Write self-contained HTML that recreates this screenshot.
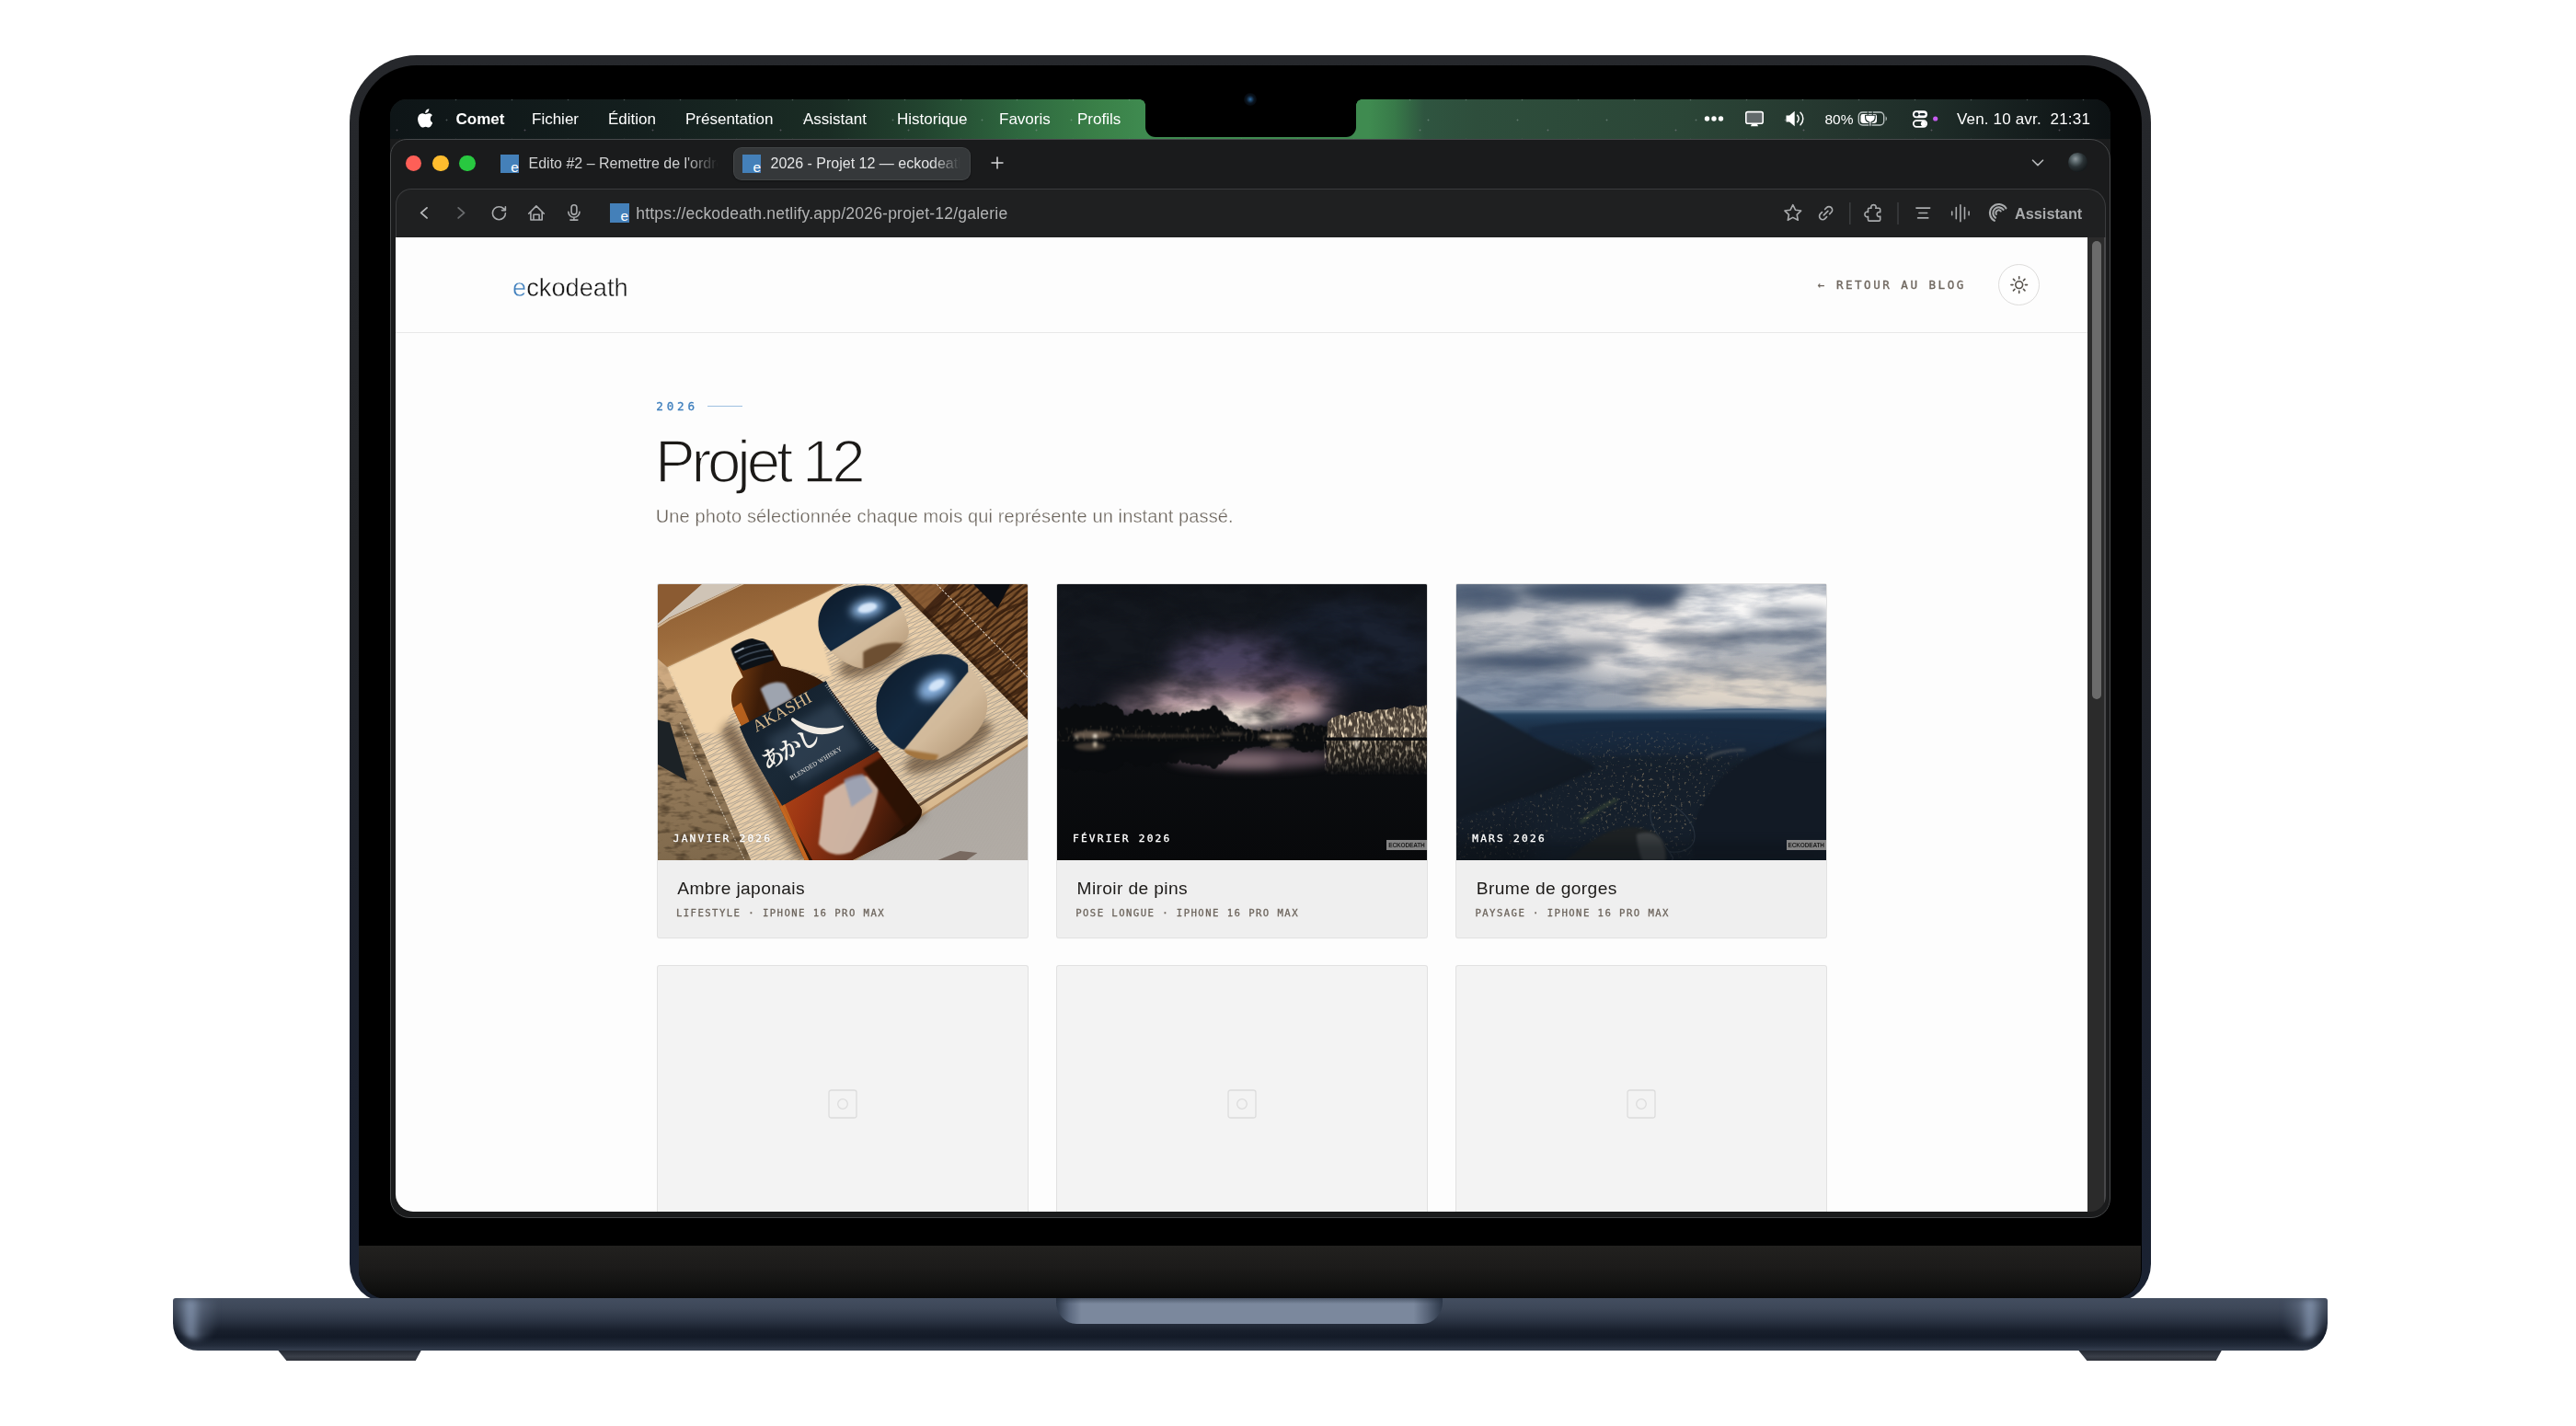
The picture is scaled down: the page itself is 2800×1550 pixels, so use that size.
<!DOCTYPE html>
<html lang="fr">
<head>
<meta charset="utf-8">
<title>2026 - Projet 12 — eckodeath</title>
<style>
*{box-sizing:border-box;margin:0;padding:0}
html,body{width:2800px;height:1550px;overflow:hidden;background:#fff}
body{position:relative;font-family:"Liberation Sans",sans-serif;color:#1c1a18}
.a{position:absolute}
svg{display:block}
/* ---------- laptop ---------- */
#lid{left:380px;top:60px;width:1958px;height:1356px;border-radius:73px 73px 42px 42px;background:linear-gradient(180deg,#26282c 0,#212327 40%,#1b202c 75%,#1a2232 100%)}
#bezel{left:390px;top:70.5px;width:1937.5px;height:1341px;border-radius:63px 63px 32px 32px;background:#000}
#chin{left:390px;top:1353.5px;width:1937px;height:58px;border-radius:0 0 31px 31px;background:linear-gradient(180deg,#22211f 0,#1c1b1a 40%,#111110 80%,#090909 100%)}
#base{overflow:hidden;left:187.5px;top:1410.5px;width:2342px;height:57.5px;border-radius:3px 3px 27px 27px / 3px 3px 30px 30px;background:linear-gradient(180deg,#434e60 0,#3d4758 20%,#2c3545 42%,#181f2c 62%,#131a27 74%,#222b3a 90%,#353f4f 100%)}
#base:before,#base:after{content:"";position:absolute;top:1px;width:46px;height:44px;border-radius:3px 3px 24px 24px;filter:blur(3px)}
#base:before{left:3px;background:linear-gradient(90deg,rgba(150,168,196,0) 0,rgba(150,168,196,.75) 35%,rgba(150,168,196,.25) 60%,rgba(150,168,196,0) 100%)}
#base:after{right:3px;background:linear-gradient(270deg,rgba(150,168,196,0) 0,rgba(150,168,196,.75) 35%,rgba(150,168,196,.25) 60%,rgba(150,168,196,0) 100%)}
#basenotch{left:1148px;top:1410.5px;width:420px;height:28.5px;border-radius:0 0 22px 22px / 0 0 24px 24px;background:linear-gradient(180deg,rgba(40,50,66,.55) 0,rgba(40,50,66,0) 22%),linear-gradient(90deg,#2d3849 0,#5d6a80 3.5%,#7b889d 6.5%,#7b889d 92.5%,#596579 96%,#2c3748 100%)}
.foot{top:1467.5px;width:156px;height:11.5px;background:linear-gradient(180deg,#232832 0,#3a3f49 60%,#2c3038 100%);clip-path:polygon(0 0,100% 0,96% 100%,6% 100%)}
/* ---------- screen ---------- */
#screen{left:424px;top:108px;width:1870px;height:1215.5px;border-radius:18px 18px 21px 21px;overflow:hidden;background:#1a1b1c}
#abs{left:-424px;top:-108px;width:2800px;height:1550px}
.mi,#url,#back,#yr,#logo,.tabt,.mo,.ct,.cs,#h1,.gs{opacity:.999}

/* ---------- menubar ---------- */
#menubar{left:424px;top:108px;width:1870px;height:43px;background:
 linear-gradient(90deg,#0e1517 0,#141f1e 276px,#1a2c24 476px,#22442f 580px,#2f6a40 690px,#3a8048 770px,#3f8b50 822px,#3f8b50 1064px,#387a49 1092px,#2f5540 1124px,#2e4e3c 1180px,#2b4637 1400px,#25372f 1560px,#1e2c28 1680px,#141c1c 1790px,#0c1113 1870px)}
#stars{left:424px;top:108px;width:1870px;height:43px;opacity:.32;background-image:radial-gradient(circle,#cfd8dc 0,#cfd8dc .7px,transparent 1.2px),radial-gradient(circle,#b9c7c9 0,#b9c7c9 .6px,transparent 1.1px),radial-gradient(circle,#d9b6d6 0,#d9b6d6 .7px,transparent 1.2px);background-size:97px 31px,61px 43px,139px 37px;background-position:13px 7px,41px 22px,77px 15px}
#notch{left:1244.5px;top:104px;width:229px;height:44.5px;background:#000;border-radius:0 0 11px 11px}
#notch:before,#notch:after{content:"";position:absolute;top:4px;width:6px;height:6px}
#notch:before{left:-6px;background:radial-gradient(circle at 0 100%,transparent 5.5px,#000 6px)}
#notch:after{right:-6px;background:radial-gradient(circle at 100% 100%,transparent 5.5px,#000 6px)}
#cam{left:1351.500px;top:100.800px;width:14.500px;height:14.500px;border-radius:50%;background:radial-gradient(circle,#2f6ea8 0,#1d4468 18%,#0b1622 42%,#05080c 70%,#000 100%)}
.mi{top:119px;height:22px;line-height:22px;font-size:17px;color:#fff;white-space:nowrap}
.mb{font-weight:bold}
/* ---------- browser ---------- */
#win{left:424px;top:150.5px;width:1870px;height:1173px;border-radius:18px 22px 21px 21px;background:#1a1b1c;border:1px solid #47494b}
#tool{left:430px;top:205px;width:1859px;height:60px;border-radius:17px 20px 0 0;background:#1f2021;border:1px solid #3b3c3e;border-bottom:none}
.tl{top:168.75px;width:17.5px;height:17.5px;border-radius:50%}
.fav{width:20px;height:20px;background:#4480b9;overflow:hidden}
.fav i{position:absolute;left:11.4px;top:6px;font:normal 15.5px/16px "Liberation Sans",sans-serif;color:#fff}
.tabt{top:167px;height:22px;line-height:22px;font-size:16px;white-space:nowrap;overflow:hidden}
#tab2{left:796.5px;top:159.5px;width:258px;height:36px;border-radius:9px;background:#35383a;box-shadow:inset 0 0 0 1px rgba(255,255,255,.07),0 1px 2px rgba(0,0,0,.35)}
#url{left:691.2px;top:220px;height:24px;line-height:24px;font-size:17.5px;letter-spacing:.22px;color:#b3b4b5;white-space:nowrap}
.ic{fill:none;stroke:#a9abad;stroke-width:1.6;stroke-linecap:round;stroke-linejoin:round}
#track{left:2268.5px;top:257.5px;width:20.3px;height:1059.75px;background:linear-gradient(90deg,#2b2b2b 0,#2b2b2b 17.8px,#48484a 17.9px,#48484a 100%);border-radius:0 0 17px 0}
#thumb{left:2273.5px;top:262px;width:10.5px;height:498px;border-radius:5.5px;background:#6b6b6b}

/* ---------- page ---------- */
#page{left:430px;top:257.5px;width:1838.75px;height:1059.75px;background:#fdfdfd;overflow:hidden;border-radius:0 0 0 19px}
#pabs{left:-430px;top:-257.5px;width:2800px;height:1550px}
.mono{font-family:"DejaVu Sans Mono","Liberation Mono",monospace;white-space:nowrap;-webkit-text-stroke:.32px currentColor}
#logo{left:557px;top:295px;height:36px;line-height:36px;font-size:27.25px;color:#161616;white-space:nowrap;-webkit-text-stroke:.4px #fdfdfd}
#logo b{font-weight:normal;color:#3f7fbd}
#back{left:1975.8px;top:299.5px;height:20px;line-height:20px;font-size:12.6px;letter-spacing:2.48px;color:#6e665e}
#tog{left:2172px;top:287px;width:45px;height:45px;border-radius:50%;border:1.2px solid #dddcdb;background:#fefefe}
#yr{left:713.3px;top:432.4px;height:20px;line-height:20px;font-size:12.6px;letter-spacing:3.8px;color:#3f7fbd}
#h1{left:712px;top:461.9px;height:80px;line-height:80px;font-size:65.5px;letter-spacing:-4.2px;color:#1c1a18;white-space:nowrap;-webkit-text-stroke:1.7px #fdfdfd}
#sub{left:712.8px;top:548px;height:26px;line-height:26px;font-size:20px;letter-spacing:.13px;color:#6a635b;white-space:nowrap;-webkit-text-stroke:.3px #fdfdfd;opacity:.999}
.card{width:402px;height:384px;top:634.5px;background:#efefef;border-radius:2px;box-shadow:0 0 0 1px #e2e2e2,0 1px 2px rgba(0,0,0,.05);overflow:hidden}
.ph{left:0;top:0;width:402px;height:300.5px;overflow:hidden}
.ph svg{position:absolute;left:0;top:0;width:402px;height:300.5px}
.mo{left:17.2px;top:269.5px;height:16px;line-height:16px;font-size:11.2px;letter-spacing:2.23px;color:#fff;text-shadow:0 0 2px rgba(0,0,0,.35)}
.ct{left:21.8px;top:318.5px;height:26px;line-height:26px;font-size:19.2px;color:#1c1a18;white-space:nowrap;letter-spacing:.38px}
.cs{left:20.4px;top:349px;height:16px;line-height:16px;font-size:10.6px;letter-spacing:1.455px;color:#6e665e}
.wm{left:358.5px;top:278px;width:43.5px;height:11.5px;background:#858585;color:#1d1d1d;font:bold 6.5px/11.5px "Liberation Sans",sans-serif;text-align:center;letter-spacing:-.15px;overflow:hidden}
.card2{width:402px;height:384px;top:1049.5px;background:#f3f3f3;border-radius:2px;box-shadow:0 0 0 1px #e1e1e1}
.card2 svg{position:absolute;left:185px;top:134px}
</style>
</head>
<body>
<div id="lid" class="a"></div>
<div id="bezel" class="a"></div>
<div id="chin" class="a"></div>
<div id="base" class="a"></div>
<div id="basenotch" class="a"></div>
<div class="foot a" style="left:302px"></div>
<div class="foot a" style="left:2259px"></div>
<div id="screen" class="a"><div id="abs" class="a">
<div id="menubar" class="a"></div>
<div id="stars" class="a"></div>
<div id="notch" class="a"></div>
<svg class="a" style="left:452px;top:117.5px" width="18" height="21" viewBox="0 0 170 200"><path fill="#fff" d="M150 105c0-24 20-35 21-36-11-17-29-19-35-19-15-2-29 9-37 9-8 0-19-9-32-8-16 0-31 9-40 24-17 30-4 73 12 97 8 12 18 25 30 24 12 0 17-8 31-8 15 0 19 8 32 8 13 0 21-12 29-24 9-13 13-26 13-27-1 0-25-10-25-38zM126 33c7-8 11-19 10-31-10 1-22 7-29 15-6 7-12 19-10 30 11 1 22-6 29-14z"/></svg>
<div class="a mi mb" style="left:495.5px">Comet</div>
<div class="a mi" style="left:578px">Fichier</div>
<div class="a mi" style="left:661px">Édition</div>
<div class="a mi" style="left:745px">Présentation</div>
<div class="a mi" style="left:873px">Assistant</div>
<div class="a mi" style="left:975px">Historique</div>
<div class="a mi" style="left:1086px">Favoris</div>
<div class="a mi" style="left:1171px">Profils</div>
<!-- status items -->
<svg class="a" style="left:1850px;top:118px" width="230" height="24" viewBox="0 0 230 24">
 <g fill="#fff"><circle cx="5.5" cy="11" r="2.7"/><circle cx="13" cy="11" r="2.7"/><circle cx="20.5" cy="11" r="2.7"/></g>
 <rect x="47.8" y="3.6" width="18.4" height="12.6" rx="2" fill="#626a6b" stroke="#fff" stroke-width="1.6"/><path d="M53 19.3h8l-1-2.6h-6z" fill="#fff"/>
 <path d="M91.5 7.5h3.6l5.6-4.7v16.4l-5.6-4.7h-3.6z" fill="#fff"/><path d="M103.6 7.2a5.4 5.4 0 0 1 0 7.6M107 4.2a9.6 9.6 0 0 1 0 13.6" fill="none" stroke="#fff" stroke-width="1.5" stroke-linecap="round"/>
 <rect x="170.3" y="4" width="27.4" height="14" rx="4.2" fill="none" stroke="#b9c2c0" stroke-width="1.4"/><rect x="172.4" y="6.1" width="17.6" height="9.8" rx="2.4" fill="#fff"/><path d="M199.6 8.6c1.7.5 1.7 4.3 0 4.8z" fill="#b9c2c0"/>
 <path d="M180.3 3.2v4.2m5-4.2v4.2M177.6 7.2h10.6v2.4a5.3 5.3 0 0 1-4.2 5.2v4.4h-2.2v-4.4a5.3 5.3 0 0 1-4.2-5.2z" fill="#fff" stroke="#1d2e2a" stroke-width="1.1" stroke-linejoin="round"/>
</svg>
<div class="a mi" style="left:1983.5px;font-size:15.5px;top:118.5px">80%</div>
<svg class="a" style="left:2078px;top:119px" width="32" height="22" viewBox="0 0 32 22">
 <rect x="1" y="1.2" width="16" height="8" rx="4" fill="#fff"/><circle cx="5.2" cy="5.2" r="2.3" fill="#18262a"/><rect x="8.5" y="4" width="6" height="2.4" rx="1.2" fill="#18262a"/>
 <rect x="1.8" y="12.2" width="14.4" height="6.6" rx="3.3" fill="none" stroke="#fff" stroke-width="1.7"/><circle cx="12.6" cy="15.5" r="2.7" fill="#fff"/>
 <circle cx="25.7" cy="10" r="2.6" fill="#c65cf0"/>
</svg>
<div class="a mi" style="left:2127px;letter-spacing:.17px">Ven. 10 avr.&nbsp; 21:31</div>
<!-- window -->
<div id="win" class="a"></div>
<div class="a tl" style="left:440.75px;background:#fe5f57"></div>
<div class="a tl" style="left:470px;background:#febc2e"></div>
<div class="a tl" style="left:499.25px;background:#28c840"></div>
<div class="a fav" style="left:543.75px;top:168px"><i>e</i></div>
<div class="a tabt" style="left:574.5px;width:208px;color:#d0d1d2;-webkit-mask-image:linear-gradient(90deg,#000 82%,transparent 99%);mask-image:linear-gradient(90deg,#000 82%,transparent 99%)">Edito #2 – Remettre de l'ordre</div>
<div id="tab2" class="a"></div>
<div class="a fav" style="left:807px;top:168px"><i>e</i></div>
<div class="a tabt" style="left:837.5px;width:208px;color:#e4e5e6;-webkit-mask-image:linear-gradient(90deg,#000 84%,transparent 99%);mask-image:linear-gradient(90deg,#000 84%,transparent 99%)">2026 - Projet 12 — eckodeath</div>
<svg class="a" style="left:1076px;top:169px" width="16" height="16" viewBox="0 0 16 16"><path d="M8 1.5v13M1.5 8h13" stroke="#d8d9da" stroke-width="1.5" fill="none"/></svg>
<svg class="a" style="left:2207px;top:171px" width="16" height="12" viewBox="0 0 16 12"><path class="ic" d="M2.5 3.2 8 8.6l5.5-5.4" style="stroke:#b4b6b8"/></svg>
<div class="a" style="left:2248px;top:166px;width:20.5px;height:20.5px;border-radius:50%;background:radial-gradient(circle at 38% 32%,#8d979c 0,#59666a 22%,#2b3336 45%,#151a1c 75%,#0c0f10 100%)"></div>
<!-- toolbar -->
<div id="tool" class="a"></div>
<svg class="a" style="left:440px;top:213px" width="200" height="38" viewBox="0 0 200 38">
 <path class="ic" d="M24 12.900 17.700 18.400 24 23.900" style="stroke:#b6b8ba;stroke-width:1.900"/>
 <path class="ic" d="M58.200 12.900 64.500 18.400 58.200 23.900" style="stroke:#696b6d;stroke-width:1.900"/>
 <path class="ic" d="M109.400 18.700a7 7 0 1 1-7-7c1.960 0 3.840.780 5.240 2.130L109.400 15.590M109.400 11.700v3.890h-3.890"/>
 <path class="ic" d="M134.700 19.200 142.900 10.900l8.400 8.300M136.900 17.400v8.600h12.300v-8.600M140 26v-5.800h6.100V26"/>
 <rect class="ic" x="181.100" y="9.800" width="5.800" height="10.300" rx="2.900"/><path class="ic" d="M177.800 17.200a6.100 6.100 0 0 0 12.200 0M183.900 23.300v2.800M179.900 26.100h8"/>
</svg>
<div class="a fav" style="left:663px;top:221.25px;width:20.5px;height:20.5px"><i>e</i></div>
<div id="url" class="a">https://eckodeath.netlify.app/2026-projet-12/galerie</div>
<svg class="a" style="left:1930px;top:213px" width="260" height="38" viewBox="0 0 260 38">
 <path class="ic" d="m18.800 9.700 2.700 5.500 6.100.850-4.400 4.250 1.100 6-5.500-2.900-5.500 2.900 1.100-6-4.400-4.250 6.100-.850z"/>
 <g transform="translate(54.6 18.600) rotate(-45)"><path class="ic" d="M-2.200 -3.600h-2.600a3.600 3.600 0 0 0 0 7.200h2.600M2.200 -3.600h2.600a3.600 3.600 0 0 1 0 7.200h-2.600M-3.200 0h6.400" style="stroke-width:1.7"/></g>
 <path d="M80.800 7v24M133 7v24" stroke="#3e4042" stroke-width="1.400"/>
 <path class="ic" d="M101.500 13.300h2.600c-.5-1-.6-3.700 2.400-3.700 3 0 2.800 2.700 2.300 3.700h3.500c.8 0 1.400.6 1.400 1.400v3.100c-.9-.5-3.500-.600-3.500 2.200s2.500 2.800 3.500 2.200v3.500c0 .8-.6 1.400-1.400 1.400h-10.400c-.8 0-1.400-.6-1.400-1.400v-3.300c-1 .5-3.600.500-3.600-2.400 0-2.900 2.600-2.900 3.600-2.400v-2.900c0-.8.500-1.400 1-1.400z"/>
 <path class="ic" d="M152.900 13.100h14.800M155.900 18.500h8.800M154.600 23.900h11.200"/>
 <path class="ic" d="M191.700 17v3.800M196.300 12.600v12.200M200.900 9.700v18M205.500 12.600v12.200M210.100 17v3.800"/>
 <g class="ic" style="stroke-width:2.100"><path d="M237.900 26.800A9.500 9.500 0 1 1 250.470 13.330"/><path d="M238.940 23.580A6.200 6.200 0 1 1 247.580 14.940"/><path d="M239.900 20A3 3 0 0 1 244.800 16.570" style="stroke-width:1.900"/></g>
</svg>
<div class="a gs" style="left:2190px;top:220px;height:24px;line-height:24px;font-size:16.3px;font-weight:bold;color:#a9abad;white-space:nowrap">Assistant</div>
<div id="track" class="a"></div>
<div id="thumb" class="a"></div>
<div id="page" class="a"><div id="pabs" class="a">
<div class="a" style="left:430px;top:360.75px;width:1839px;height:1px;background:#e8e8e8"></div>
<div id="logo" class="a"><b>e</b>ckodeath</div>
<div id="back" class="a mono">← RETOUR AU BLOG</div>
<div id="tog" class="a"><svg width="43" height="43" viewBox="0 0 43 43" style="position:absolute;left:0;top:0"><g fill="none" stroke="#55504a" stroke-width="1.6" stroke-linecap="round"><circle cx="21.7" cy="21.6" r="3.9"/><path d="M21.700 12.800v2.100M21.700 28.300v2.100M12.900 21.600h2.100M28.400 21.600h2.100M15.450 15.350l1.480 1.480M26.470 26.370l1.480 1.480M15.450 27.850l1.480-1.480M26.470 16.830l1.480-1.480"/></g></svg></div>
<div id="yr" class="a mono">2026</div>
<div class="a" style="left:768.5px;top:441.25px;width:38.5px;height:1px;background:#9fc0e0"></div>
<div id="h1" class="a">Projet 12</div>
<div id="sub" class="a">Une photo sélectionnée chaque mois qui représente un instant passé.</div>

<div class="a card" style="left:714.5px"><div class="a ph" style="background:#b58b5e">
<svg viewBox="0 0 1909 1426" preserveAspectRatio="none">
<defs>
 <filter color-interpolation-filters="sRGB" id="p1b" filterUnits="userSpaceOnUse" x="-100" y="-100" width="2109" height="1626"><feGaussianBlur stdDeviation="6"/></filter>
 <filter color-interpolation-filters="sRGB" id="p1c" filterUnits="userSpaceOnUse" x="-100" y="-100" width="2109" height="1626"><feGaussianBlur stdDeviation="22"/></filter>
 <filter color-interpolation-filters="sRGB" id="p1d" filterUnits="userSpaceOnUse" x="-100" y="-100" width="2109" height="1626"><feGaussianBlur stdDeviation="2.5"/></filter>
 <filter color-interpolation-filters="sRGB" id="p1ill" filterUnits="userSpaceOnUse" x="0" y="380" width="560" height="1046"><feTurbulence type="fractalNoise" baseFrequency=".012 .03" numOctaves="3" seed="4"/><feColorMatrix values="0 0 0 0 0.27  0 0 0 0 0.21  0 0 0 0 0.14  3.2 0 0 0 -1.55"/></filter>
 <linearGradient id="p1tray" x1="0" y1="0" x2="1" y2="1"><stop offset="0" stop-color="#f3d6ad"/><stop offset=".45" stop-color="#ecd0aa"/><stop offset="1" stop-color="#dcc6a6"/></linearGradient>
 <linearGradient id="p1wallT" x1="0" y1="0" x2=".4" y2="1"><stop offset="0" stop-color="#8a5b31"/><stop offset=".6" stop-color="#9c6b3c"/><stop offset="1" stop-color="#ad7e4b"/></linearGradient>
 <linearGradient id="p1wallL" x1="0" y1="0" x2="0" y2="1"><stop offset="0" stop-color="#c4a078"/><stop offset=".35" stop-color="#a08462"/><stop offset="1" stop-color="#7f694c"/></linearGradient>
 <linearGradient id="p1navy" x1="0" y1="0" x2="1" y2="1"><stop offset="0" stop-color="#0c1826"/><stop offset=".5" stop-color="#142a41"/><stop offset="1" stop-color="#0d1a29"/></linearGradient>
 <linearGradient id="p1lab" x1="0" y1="0" x2="1" y2="1"><stop offset="0" stop-color="#101b27"/><stop offset=".5" stop-color="#1a2937"/><stop offset="1" stop-color="#0f1a25"/></linearGradient>
 <linearGradient id="p1beige" x1="0" y1="0" x2="1" y2="1"><stop offset="0" stop-color="#dfc9ac"/><stop offset=".6" stop-color="#d2ba9b"/><stop offset="1" stop-color="#a58765"/></linearGradient>
 <linearGradient id="p1amber" x1="0" y1="0" x2="1" y2=".2"><stop offset="0" stop-color="#a85a1e"/><stop offset=".07" stop-color="#70380f"/><stop offset=".2" stop-color="#3c1c08"/><stop offset=".7" stop-color="#2c1405"/><stop offset="1" stop-color="#231004"/></linearGradient>
 <linearGradient id="p1low" x1="0" y1="0" x2="1" y2=".3"><stop offset="0" stop-color="#b34a17"/><stop offset=".3" stop-color="#9c3513"/><stop offset=".55" stop-color="#7a2c10"/><stop offset="1" stop-color="#2e1306"/></linearGradient>
 <linearGradient id="p1floor" x1="0" y1="0" x2="1" y2="1"><stop offset="0" stop-color="#a49e98"/><stop offset="1" stop-color="#b5afa9"/></linearGradient>
 <pattern id="p1wood" width="150" height="52" patternUnits="userSpaceOnUse" patternTransform="rotate(-38)"><rect width="150" height="52" fill="#83572f"/><path d="M0 10c40-12 100 12 150 0M0 36c50 12 100-14 150 0" stroke="#3b2210" stroke-width="12" fill="none"/><path d="M0 24c40-8 110 10 150 0" stroke="#5b3819" stroke-width="4" fill="none"/></pattern>
 <pattern id="p1lines" width="120" height="30" patternUnits="userSpaceOnUse" patternTransform="rotate(-27)"><path d="M0 8c40-10 80 10 120 0M0 22c40 10 80-10 120 0" stroke="#6b7078" stroke-width="3" fill="none" opacity=".8"/></pattern>
 <pattern id="p1floorp" width="14" height="200" patternUnits="userSpaceOnUse" patternTransform="rotate(32)"><path d="M3 0v200M10 0v200" stroke="#8f8a85" stroke-width="2" opacity=".35"/></pattern>
 <clipPath id="p1cup1"><path d="M828 215C822 95 925 8 1058 6c118-2 210 66 238 232 8 60-120 164-236 198-104-14-222-110-232-221z"/></clipPath>
 <clipPath id="p1cup2"><path d="M1128 606c14-128 168-236 326-246 110-4 176 60 238 200 40 130-48 254-246 344-74 14-160-18-180-50-96-52-148-150-138-248z"/></clipPath>
 <clipPath id="p1bottle"><path d="M404 404 592 338l46 84c110 20 196 58 242 104l478 630c20 40-30 90-80 130l-280 140H760L388 640c-18-60-10-120 52-160z"/></clipPath>
 <clipPath id="p1ww"><path d="M1222 0h687v698z"/></clipPath>
 <clipPath id="p1wl"><path d="M0 385l50 45 440 996H0z"/></clipPath>
</defs>
<!-- floor -->
<rect width="1909" height="1426" fill="url(#p1floor)"/>
<rect width="1909" height="1426" fill="url(#p1floorp)"/>
<!-- top-left other box + cloth wedge -->
<path d="M0 0h230L0 205z" fill="#8b5b32"/>
<path d="M228 0h200L62 172 0 212v-10z" fill="#cfc4b6"/>
<!-- outer top wall -->
<path d="M0 212 62 172 428 0h540L50 430 0 385z" fill="url(#p1wallT)"/>
<path d="M0 214 62 174 430 0h16L64 184 0 226z" fill="#e3cfb2" opacity=".75"/>
<!-- left inner wall -->
<path d="M0 385l50 45 440 996H0z" fill="url(#p1wallL)"/>
<g clip-path="url(#p1wl)"><rect x="0" y="380" width="560" height="1046" filter="url(#p1ill)" opacity=".8"/></g>
<path d="M0 700l62 14 90 300L0 930z" fill="#1c2226"/>
<path d="M0 385l50 45 40 90-40 20L0 470z" fill="#d2ae85" opacity=".8"/>
<path d="M115 713 450 1426" stroke="#e9e0d0" stroke-width="5" stroke-dasharray="10 7" opacity=".7"/>
<!-- tray -->
<path d="M50 430 940 10 960 0h260l689 700v95L905 1426H482z" fill="url(#p1tray)"/>
<path d="M50 430 940 10 960 0h260l689 700v95L905 1426H482z" fill="url(#p1lines)"/>
<path d="M50 430 940 10 840 200l20 130 40 150-260-60-250 220-60 130H210z" fill="#f1d4ab" filter="url(#p1b)"/>
<!-- right wood wall -->
<path d="M1220 0h689v700z" fill="url(#p1wood)"/>
<path d="M1220 0h300l-150 152z" fill="#8a5c34" opacity=".85" filter="url(#p1b)"/>
<g clip-path="url(#p1ww)" stroke="#3a2110" stroke-width="16" fill="none" opacity=".8" stroke-linecap="round"><path d="M1500 330c60-40 140-40 200-120s120-90 209-120"/><path d="M1580 420c70-40 130-30 200-110s90-70 129-90"/><path d="M1660 500c60-30 110-20 160-80s60-50 89-60"/><path d="M1420 250c60-40 120-50 160-130"/><path d="M1760 600c50-30 90-20 149-90"/></g>
<path clip-path="url(#p1ww)" d="M1500 0h60l-170 190-36-36z" fill="#3a2010" opacity=".85"/>
<path d="M1220 0l689 700v-40L1250 0z" fill="#2e1a0c" opacity=".55" filter="url(#p1d)"/>
<path d="M1629 0h190l-65 125z" fill="#0b0d12"/>
<path d="M1440 0 1909 480" stroke="#efe6da" stroke-width="5" stroke-dasharray="12 8" opacity=".85"/>
<!-- rim bottom-right -->
<path d="M1909 775v30L935 1426h-50z" fill="#4a2f18" opacity=".75" filter="url(#p1d)"/>
<path d="M1909 797v36L1010 1426H905z" fill="#d9ba90"/>
<path d="M1909 826v12L1020 1426h-22z" fill="#b08a60" opacity=".8"/>
<path d="M1440 1426l120-50 90 10-60 40z" fill="#6b5a50" opacity=".8" filter="url(#p1d)"/>
<!-- shadows -->
<g filter="url(#p1c)" opacity=".6"><ellipse cx="1110" cy="380" rx="190" ry="70" fill="#4a3420" transform="rotate(-25 1110 380)"/><ellipse cx="1500" cy="840" rx="250" ry="80" fill="#4a3420" transform="rotate(-28 1500 840)"/><path d="M380 700 320 760l400 666h110z" fill="#4a3420"/><path d="M1340 1150 1380 1190 960 1426h-80z" fill="#3a2412"/></g>
<!-- cup 1 -->
<g clip-path="url(#p1cup1)"><rect x="800" y="0" width="520" height="460" fill="url(#p1beige)"/>
 <path d="M800 0h520L1262 120 884 352 800 380z" fill="url(#p1navy)"/>
 <ellipse cx="1080" cy="125" rx="86" ry="44" fill="#8fb6e0" transform="rotate(-14 1080 125)" filter="url(#p1c)"/>
 <ellipse cx="1082" cy="122" rx="50" ry="24" fill="#d6e6f8" transform="rotate(-14 1082 122)" filter="url(#p1b)"/>
 <path d="M830 360c60 20 120 60 160 90l-120 10z" fill="#9a7a56" filter="url(#p1c)"/>
 <path d="M1060 350c60-40 150-60 220-40l30 60-250 80z" fill="#6d4f32" filter="url(#p1b)"/>
</g>
<!-- cup 2 -->
<g clip-path="url(#p1cup2)"><rect x="1100" y="340" width="640" height="600" fill="url(#p1beige)"/>
 <path d="M1100 340h500l2 112-330 400-172 30z" fill="url(#p1navy)"/>
 <ellipse cx="1432" cy="528" rx="96" ry="58" fill="#86aedb" transform="rotate(-30 1432 528)" filter="url(#p1c)"/>
 <ellipse cx="1440" cy="520" rx="46" ry="24" fill="#d2e4f8" transform="rotate(-30 1440 520)" filter="url(#p1b)"/>
 <path d="M1270 850c60 10 120 20 180 30l-20 40-160-20z" fill="#a3753f" filter="url(#p1b)"/>
</g>
<!-- bottle -->
<g clip-path="url(#p1bottle)">
 <rect x="360" y="300" width="1040" height="1140" fill="url(#p1amber)"/>
 <path d="M530 540c40-34 100-44 130-24l40 70-120 70z" fill="#aab4c2" opacity=".9" filter="url(#p1b)"/>
 <path d="M642 1142 1146 854l230 300-300 272H800z" fill="url(#p1low)"/>
 <path d="M860 1090c80-60 160-100 220-100l60 60c-20 120-60 230-140 330-70 30-130 10-170-40z" fill="#d8c3b2" opacity=".9" filter="url(#p1b)"/>
 <path d="M960 1010c30-20 70-30 100-30l50 90-110 80z" fill="#8d9db8" opacity=".75" filter="url(#p1b)"/>
 <path d="M1060 950l110-66 210 276-100 90z" fill="#2c1205" opacity=".95" filter="url(#p1b)"/>
 <path d="M642 1142l140 284H640L540 1180z" fill="#c4591b"/>
 <path d="M388 640 430 610 780 1426h-40z" fill="#c66a22" opacity=".85" filter="url(#p1d)"/>
</g>
<!-- cap -->
<path d="M378 332c30-30 90-52 110-52l64 18c26 30 44 60 50 92l-162 56c-30-30-56-80-62-114z" fill="#0c1116"/>
<path d="M400 352c40-24 110-44 150-46M414 384c40-24 116-46 158-48M432 414c40-24 116-44 160-46" stroke="#3c4855" stroke-width="8" fill="none"/>
<path d="M400 350l40-20" stroke="#cfd8e2" stroke-width="9" stroke-linecap="round" opacity=".8"/>
<!-- label -->
<path d="M422 736 868 498c40 90 180 270 278 356L642 1142C560 1010 470 860 422 736z" fill="url(#p1lab)"/>
<path d="M560 800 900 610l160 230-320 190z" fill="#3d5064" opacity=".5" filter="url(#p1c)"/>
<g fill="#f1ece4"><path d="M700 690c60 40 160 70 250 40 10-4 14 4 4 12-90 60-200 30-262-36-8-10 0-20 8-16z"/></g>
<g font-family="'Liberation Serif',serif" fill="#d8b98c" transform="translate(508 764) rotate(-29)"><text font-size="86" letter-spacing="2">AKASHI</text></g>
<g font-family="'Liberation Serif',serif" fill="#e8e4de" transform="translate(690 1012) rotate(-31)"><text font-size="33" letter-spacing="1">BLENDED WHISKY</text></g>
<g font-family="'Liberation Serif','Noto Serif CJK SC','Noto Sans CJK JP',serif" fill="#f2efe9" transform="translate(560 960) rotate(-28)"><text font-size="118" font-weight="bold" letter-spacing="-14">あかし</text></g>
<path d="M870 520 1120 850" stroke="#e8e4de" stroke-width="20" stroke-dasharray="3 9" opacity=".7"/>
</svg>
</div><div class="a mo mono">JANVIER 2026</div><div class="a ct">Ambre japonais</div><div class="a cs mono">LIFESTYLE · IPHONE 16 PRO MAX</div></div>
<div class="a card" style="left:1148.75px"><div class="a ph" style="background:#0d1014">
<svg viewBox="0 0 1909 1426" preserveAspectRatio="none">
<defs>
 <filter color-interpolation-filters="sRGB" id="p2a" filterUnits="userSpaceOnUse" x="-100" y="-100" width="2109" height="1626"><feGaussianBlur stdDeviation="55"/></filter>
 <filter color-interpolation-filters="sRGB" id="p2b" filterUnits="userSpaceOnUse" x="-100" y="-100" width="2109" height="1626"><feGaussianBlur stdDeviation="24"/></filter>
 <filter color-interpolation-filters="sRGB" id="p2c" filterUnits="userSpaceOnUse" x="-100" y="-100" width="2109" height="1626"><feGaussianBlur stdDeviation="7"/></filter>
 <filter color-interpolation-filters="sRGB" id="p2d" filterUnits="userSpaceOnUse" x="-100" y="-100" width="2109" height="1626"><feGaussianBlur stdDeviation="2"/></filter>
 <filter color-interpolation-filters="sRGB" id="p2n" filterUnits="userSpaceOnUse" x="0" y="0" width="1909" height="800"><feTurbulence type="fractalNoise" baseFrequency=".005 .011" numOctaves="4" seed="7"/><feColorMatrix values="0 0 0 0 0.055  0 0 0 0 0.065  0 0 0 0 0.09  1.7 1.2 0 0 -1.25"/></filter>
 <filter color-interpolation-filters="sRGB" id="p2sp" filterUnits="userSpaceOnUse" x="1380" y="600" width="540" height="400"><feTurbulence type="fractalNoise" baseFrequency=".075 .03" numOctaves="2" seed="3"/><feColorMatrix values="0 0 0 0 0.95  0 0 0 0 0.88  0 0 0 0 0.76  3.2 0 0 0 -1.5"/></filter>
 <filter color-interpolation-filters="sRGB" id="p2sq" filterUnits="userSpaceOnUse" x="0" y="700" width="1400" height="200"><feTurbulence type="fractalNoise" baseFrequency=".06 .03" numOctaves="2" seed="9"/><feColorMatrix values="0 0 0 0 0.8  0 0 0 0 0.7  0 0 0 0 0.56  3.2 0 0 0 -1.75"/></filter>
 <linearGradient id="p2sky" x1="0" y1="0" x2="0" y2="1"><stop offset="0" stop-color="#12161c"/><stop offset=".3" stop-color="#161a22"/><stop offset=".54" stop-color="#171a22"/><stop offset=".6" stop-color="#0b0d10"/><stop offset="1" stop-color="#08090b"/></linearGradient>
 <linearGradient id="p2fade" x1="0" y1="0" x2="0" y2="1"><stop offset="0" stop-color="#fff"/><stop offset=".5" stop-color="#fff" stop-opacity=".75"/><stop offset="1" stop-color="#fff" stop-opacity="0"/></linearGradient>
 <mask id="p2m"><rect x="1380" y="806" width="540" height="180" fill="url(#p2fade)"/></mask>
 <clipPath id="p2lit"><path d="M1394 792V716l24-26 44-18 36 10 30-20 44-8 40 12 36-20 50 2 44-14 40 10 40-20 50 8 37-10v170z"/></clipPath>
 <clipPath id="p2sk"><rect width="1909" height="800"/></clipPath>
 <clipPath id="p2tr"><path d="M0 730h1390v80H0z"/></clipPath>
</defs>
<rect width="1909" height="1426" fill="url(#p2sky)"/>
<g clip-path="url(#p2sk)">
<ellipse cx="1520" cy="330" rx="400" ry="250" fill="#1a2130" filter="url(#p2a)"/>
<ellipse cx="330" cy="330" rx="300" ry="200" fill="#14181f" filter="url(#p2a)"/>
<ellipse cx="905" cy="400" rx="330" ry="130" fill="#4a4360" filter="url(#p2a)"/>
<ellipse cx="1180" cy="520" rx="260" ry="80" fill="#4c3f58" filter="url(#p2a)"/>
<ellipse cx="880" cy="610" rx="600" ry="96" fill="#a98b9a" filter="url(#p2a)"/>
<ellipse cx="900" cy="650" rx="470" ry="60" fill="#c2a6a8" filter="url(#p2b)"/>
<ellipse cx="900" cy="684" rx="280" ry="50" fill="#f4e9dc" filter="url(#p2b)"/>
<ellipse cx="680" cy="590" rx="220" ry="14" fill="#b59ca6" filter="url(#p2b)" transform="rotate(14 680 590)"/>
<ellipse cx="1240" cy="570" rx="150" ry="30" fill="#8a6866" filter="url(#p2b)" opacity=".8"/>
<rect width="1909" height="800" filter="url(#p2n)" opacity=".62"/>
<g filter="url(#p2a)" fill="#10131a"><ellipse cx="250" cy="540" rx="300" ry="60" opacity=".8"/><ellipse cx="1640" cy="590" rx="260" ry="70" opacity=".85"/><ellipse cx="1330" cy="330" rx="160" ry="90" opacity=".5"/></g>
</g>
<!-- water sky reflection -->
<ellipse cx="1000" cy="900" rx="420" ry="52" fill="#5a4954" filter="url(#p2b)"/>
<ellipse cx="960" cy="915" rx="190" ry="24" fill="#8d767c" filter="url(#p2b)"/>
<!-- tree line + reflection -->
<g filter="url(#p2d)" fill="#0a0c0e">
<path d="M0 806 L0 633.8 L5 634.3 L10 633.4 L15 638.2 L20 645.4 L25 644.6 L30 645.5 L35 640.3 L40 637.9 L45 634.6 L50 633.5 L55 638.9 L60 639.9 L65 641.2 L70 632.0 L75 627.8 L80 625.8 L85 622.1 L90 617.1 L95 615.5 L100 618.9 L105 622.2 L110 625.0 L115 632.4 L120 640.9 L125 630.6 L130 624.7 L135 624.4 L140 626.0 L145 627.9 L150 626.5 L155 629.1 L160 628.6 L165 627.1 L170 626.1 L175 631.2 L180 631.2 L185 625.9 L190 629.6 L195 632.4 L200 623.0 L205 615.9 L210 616.2 L215 615.1 L220 618.3 L225 620.9 L230 619.1 L235 611.4 L240 612.2 L245 607.1 L250 609.4 L255 610.4 L260 615.8 L265 618.2 L270 620.1 L275 618.7 L280 620.4 L285 624.5 L290 627.4 L295 626.9 L300 624.3 L305 622.1 L310 627.2 L315 630.8 L320 638.1 L325 643.4 L330 643.8 L335 647.2 L340 653.1 L345 675.8 L350 674.5 L355 676.2 L360 677.2 L365 681.3 L370 672.6 L375 668.9 L380 664.7 L385 667.9 L390 667.9 L395 656.3 L400 647.7 L405 645.9 L410 644.1 L415 645.1 L420 651.0 L425 651.6 L430 652.9 L435 655.8 L440 657.2 L445 649.1 L450 646.3 L455 646.1 L460 646.2 L465 643.4 L470 644.0 L475 644.5 L480 650.6 L485 656.2 L490 670.1 L495 673.0 L500 672.9 L505 669.7 L510 662.5 L515 662.8 L520 667.3 L525 668.1 L530 672.4 L535 678.4 L540 672.2 L545 671.7 L550 665.5 L555 662.3 L560 660.4 L565 663.6 L570 667.7 L575 672.4 L580 664.3 L585 661.8 L590 658.2 L595 659.4 L600 663.1 L605 659.4 L610 659.2 L615 656.7 L620 660.0 L625 665.1 L630 672.6 L635 683.2 L640 672.5 L645 663.8 L650 661.2 L655 663.5 L660 666.4 L665 659.8 L670 656.3 L675 658.9 L680 661.5 L685 658.0 L690 650.7 L695 649.3 L700 651.2 L705 652.8 L710 652.0 L715 652.8 L720 652.6 L725 653.3 L730 653.8 L735 651.9 L740 651.0 L745 646.9 L750 642.5 L755 643.8 L760 644.7 L765 646.7 L770 647.8 L775 642.6 L780 640.8 L785 644.1 L790 638.8 L795 632.0 L800 627.4 L805 623.7 L810 624.3 L815 624.5 L820 628.0 L825 633.6 L830 643.2 L835 652.3 L840 648.7 L845 650.4 L850 655.7 L855 661.3 L860 673.5 L865 674.4 L870 673.3 L875 679.5 L880 682.0 L885 691.2 L890 703.4 L895 705.2 L900 706.9 L905 709.8 L910 710.3 L915 710.1 L920 714.9 L925 715.6 L930 721.2 L935 733.0 L940 732.8 L945 728.3 L950 727.0 L955 731.7 L960 736.3 L965 744.1 L970 745.1 L975 750.0 L980 747.1 L985 744.6 L990 745.2 L995 748.3 L1000 748.3 L1005 749.7 L1010 752.9 L1015 753.9 L1020 752.5 L1025 754.3 L1030 754.6 L1035 754.7 L1040 753.6 L1045 756.7 L1050 749.4 L1055 745.4 L1060 749.7 L1065 754.5 L1070 749.5 L1075 754.7 L1080 758.3 L1085 758.1 L1090 758.1 L1095 759.2 L1100 757.8 L1105 757.6 L1110 753.0 L1115 749.3 L1120 747.3 L1125 748.8 L1130 749.7 L1135 746.8 L1140 750.8 L1145 752.9 L1150 753.5 L1155 751.7 L1160 753.5 L1165 752.6 L1170 752.4 L1175 747.4 L1180 744.9 L1185 747.5 L1190 751.4 L1195 751.7 L1200 746.6 L1205 746.6 L1210 753.7 L1215 750.8 L1220 754.9 L1225 744.0 L1230 734.4 L1235 736.2 L1240 728.4 L1245 728.6 L1250 729.2 L1255 726.8 L1260 722.3 L1265 717.0 L1270 716.0 L1275 714.9 L1280 717.4 L1285 716.5 L1290 718.0 L1295 717.5 L1300 725.8 L1305 721.8 L1310 717.3 L1315 714.5 L1320 716.4 L1325 724.3 L1330 728.2 L1335 732.3 L1340 728.3 L1345 731.6 L1350 731.5 L1355 727.7 L1360 727.2 L1365 725.5 L1370 730.9 L1375 732.2 L1380 735.2 L1385 732.0 L1390 733.1 L1395 735.0 L1395 806z"/>
<path d="M0 804 L0 954.1 L5 953.6 L10 954.3 L15 950.1 L20 943.9 L25 944.5 L30 943.6 L35 948.1 L40 950.0 L45 952.8 L50 953.7 L55 949.0 L60 948.1 L65 946.9 L70 954.7 L75 958.3 L80 959.9 L85 963.1 L90 967.3 L95 968.6 L100 965.6 L105 962.7 L110 960.2 L115 953.8 L120 946.4 L125 955.2 L130 960.2 L135 960.4 L140 959.0 L145 957.3 L150 958.4 L155 956.1 L160 956.5 L165 957.7 L170 958.5 L175 954.1 L180 954.0 L185 958.5 L190 955.3 L195 952.8 L200 960.8 L205 966.8 L210 966.5 L215 967.4 L220 964.6 L225 962.3 L230 963.8 L235 970.3 L240 969.6 L245 973.9 L250 971.9 L255 970.9 L260 966.2 L265 964.1 L270 962.4 L275 963.5 L280 962.0 L285 958.4 L290 955.9 L295 956.2 L300 958.4 L305 960.2 L310 955.8 L315 952.6 L320 946.3 L325 941.6 L330 941.2 L335 938.2 L340 933.1 L345 913.5 L350 914.6 L355 913.0 L360 912.1 L365 908.5 L370 915.9 L375 919.1 L380 922.6 L385 919.8 L390 919.7 L395 929.6 L400 937.0 L405 938.5 L410 939.9 L415 939.0 L420 933.9 L425 933.3 L430 932.1 L435 929.6 L440 928.3 L445 935.2 L450 937.5 L455 937.6 L460 937.5 L465 939.8 L470 939.3 L475 938.8 L480 933.5 L485 928.6 L490 916.6 L495 914.0 L500 914.0 L505 916.7 L510 922.8 L515 922.5 L520 918.6 L525 917.8 L530 914.1 L535 908.8 L540 914.1 L545 914.5 L550 919.7 L555 922.4 L560 924.0 L565 921.2 L570 917.6 L575 913.5 L580 920.4 L585 922.5 L590 925.5 L595 924.4 L600 921.2 L605 924.3 L610 924.4 L615 926.5 L620 923.6 L625 919.1 L630 912.6 L635 903.4 L640 912.6 L645 920.0 L650 922.1 L655 920.1 L660 917.5 L665 923.2 L670 926.1 L675 923.8 L680 921.5 L685 924.4 L690 930.7 L695 931.8 L700 930.1 L705 928.7 L710 929.3 L715 928.5 L720 928.6 L725 928.0 L730 927.5 L735 929.0 L740 929.8 L745 933.2 L750 936.9 L755 935.8 L760 934.9 L765 933.1 L770 932.1 L775 936.5 L780 938.0 L785 935.1 L790 939.6 L795 945.4 L800 949.3 L805 952.4 L810 951.8 L815 951.6 L820 948.5 L825 943.6 L830 935.3 L835 927.4 L840 930.4 L845 928.9 L850 924.3 L855 919.4 L860 908.9 L865 908.0 L870 908.9 L875 903.5 L880 901.3 L885 893.3 L890 882.8 L895 881.1 L900 879.6 L905 877.1 L910 876.6 L915 876.7 L920 872.5 L925 871.8 L930 866.9 L935 856.7 L940 856.8 L945 860.6 L950 861.7 L955 857.6 L960 853.6 L965 846.8 L970 845.9 L975 841.6 L980 844.0 L985 846.1 L990 845.5 L995 842.8 L1000 842.7 L1005 841.5 L1010 838.6 L1015 837.7 L1020 838.8 L1025 837.2 L1030 836.9 L1035 836.8 L1040 837.6 L1045 834.9 L1050 841.1 L1055 844.5 L1060 840.7 L1065 836.5 L1070 840.8 L1075 836.2 L1080 833.1 L1085 833.2 L1090 833.1 L1095 832.1 L1100 833.3 L1105 833.4 L1110 837.3 L1115 840.4 L1120 842.0 L1125 840.7 L1130 839.8 L1135 842.3 L1140 838.8 L1145 836.9 L1150 836.3 L1155 837.8 L1160 836.2 L1165 836.9 L1170 837.0 L1175 841.2 L1180 843.3 L1185 841.0 L1190 837.6 L1195 837.3 L1200 841.6 L1205 841.5 L1210 835.4 L1215 837.8 L1220 834.2 L1225 843.5 L1230 851.7 L1235 850.1 L1240 856.7 L1245 856.5 L1250 855.9 L1255 857.9 L1260 861.7 L1265 866.2 L1270 867.0 L1275 867.9 L1280 865.7 L1285 866.4 L1290 865.0 L1295 865.4 L1300 858.2 L1305 861.6 L1310 865.4 L1315 867.7 L1320 866.0 L1325 859.2 L1330 855.7 L1335 852.2 L1340 855.5 L1345 852.6 L1350 852.7 L1355 855.9 L1360 856.2 L1365 857.6 L1370 852.9 L1375 851.7 L1380 849.1 L1385 851.8 L1390 850.8 L1395 849.1 L1395 804z" opacity=".93"/>
</g>
<!-- faint lights within trees -->
<g clip-path="url(#p2tr)"><rect x="0" y="700" width="1400" height="200" filter="url(#p2sq)" opacity=".3"/></g>
<!-- lights -->
<g filter="url(#p2c)"><ellipse cx="180" cy="776" rx="100" ry="20" fill="#7d6c5b" opacity=".8"/><circle cx="196" cy="784" r="11" fill="#fff4e2"/><circle cx="100" cy="792" r="7" fill="#f6e6cc"/><ellipse cx="170" cy="838" rx="80" ry="20" fill="#54493f" opacity=".75"/><ellipse cx="196" cy="826" rx="9" ry="16" fill="#d8c8b0"/><circle cx="1140" cy="792" r="11" fill="#fff4e2"/><ellipse cx="1130" cy="786" rx="90" ry="16" fill="#7d6c5b" opacity=".8"/><circle cx="1086" cy="790" r="6" fill="#f6e6cc"/><ellipse cx="1150" cy="830" rx="50" ry="18" fill="#5d5146" opacity=".7"/><ellipse cx="560" cy="782" rx="280" ry="9" fill="#4f443a" opacity=".7"/><ellipse cx="900" cy="772" rx="60" ry="8" fill="#6d5f52" opacity=".7"/></g>
<!-- lit trees right -->
<g clip-path="url(#p2lit)"><rect x="1380" y="620" width="540" height="180" fill="#4a4036"/><rect x="1380" y="620" width="540" height="180" filter="url(#p2sp)"/></g>
<circle cx="1546" cy="786" r="10" fill="#fff6e6" filter="url(#p2c)"/>
<path d="M1380 790h529v16h-529z" fill="#0b0c0e" filter="url(#p2d)"/>
<g mask="url(#p2m)"><rect x="1390" y="806" width="520" height="180" fill="#2a251f"/><rect x="1390" y="806" width="520" height="180" filter="url(#p2sp)" opacity=".8"/></g>
<ellipse cx="1546" cy="826" rx="9" ry="18" fill="#f6ead6" filter="url(#p2c)"/>
</svg>
</div><div class="a mo mono">FÉVRIER 2026</div><div class="a wm">ECKODEATH</div><div class="a ct">Miroir de pins</div><div class="a cs mono">POSE LONGUE · IPHONE 16 PRO MAX</div></div>
<div class="a card" style="left:1583px"><div class="a ph" style="background:#2a3a4c">
<svg viewBox="0 0 1909 1426" preserveAspectRatio="none">
<defs>
 <filter color-interpolation-filters="sRGB" id="p3a" filterUnits="userSpaceOnUse" x="-100" y="-100" width="2109" height="1626"><feGaussianBlur stdDeviation="55"/></filter>
 <filter color-interpolation-filters="sRGB" id="p3b" filterUnits="userSpaceOnUse" x="-100" y="-100" width="2109" height="1626"><feGaussianBlur stdDeviation="24"/></filter>
 <filter color-interpolation-filters="sRGB" id="p3c" filterUnits="userSpaceOnUse" x="-100" y="-100" width="2109" height="1626"><feGaussianBlur stdDeviation="8"/></filter>
 <filter color-interpolation-filters="sRGB" id="p3d" filterUnits="userSpaceOnUse" x="-100" y="-100" width="2109" height="1626"><feGaussianBlur stdDeviation="2"/></filter>
 <filter color-interpolation-filters="sRGB" id="p3n" filterUnits="userSpaceOnUse" x="0" y="0" width="1909" height="650"><feTurbulence type="fractalNoise" baseFrequency=".0035 .014" numOctaves="4" seed="11"/><feColorMatrix values="0 0 0 0 0.25  0 0 0 0 0.32  0 0 0 0 0.43  1.9 1.4 0 0 -1.4"/></filter>
 <filter color-interpolation-filters="sRGB" id="p3sp" filterUnits="userSpaceOnUse" x="0" y="760" width="1909" height="666"><feTurbulence type="fractalNoise" baseFrequency=".07 .06" numOctaves="2" seed="5"/><feColorMatrix values="0 0 0 0 0.66  0 0 0 0 0.58  0 0 0 0 0.45  5.5 0 0 0 -3.45"/></filter>
 <linearGradient id="p3sky" x1="0" y1="0" x2="0" y2="1"><stop offset="0" stop-color="#8a94a2"/><stop offset=".35" stop-color="#b0b4ba"/><stop offset=".7" stop-color="#a2a8b2"/><stop offset="1" stop-color="#909aa9"/></linearGradient>
 <linearGradient id="p3land" x1="0" y1="0" x2="0" y2="1"><stop offset="0" stop-color="#2c4c69"/><stop offset=".07" stop-color="#1f3852"/><stop offset=".16" stop-color="#192a3f"/><stop offset=".32" stop-color="#162332"/><stop offset=".6" stop-color="#151f2c"/><stop offset="1" stop-color="#10171f"/></linearGradient>
 <linearGradient id="p3ml" x1="0" y1="0" x2=".5" y2="1"><stop offset="0" stop-color="#1a2533"/><stop offset=".5" stop-color="#151e2a"/><stop offset="1" stop-color="#10171f"/></linearGradient>
 <radialGradient id="p3vm" cx="1000" cy="1080" r="640" gradientUnits="userSpaceOnUse" gradientTransform="matrix(1 0 0 .62 0 410)"><stop offset="0" stop-color="#fff"/><stop offset=".6" stop-color="#fff" stop-opacity=".7"/><stop offset="1" stop-color="#fff" stop-opacity="0"/></radialGradient>
 <mask id="p3m"><rect x="0" y="760" width="1909" height="666" fill="url(#p3vm)"/><path d="M0 1180 420 1020l120 180-200 226H0z" fill="#fff" opacity=".5" filter="url(#p3b)"/></mask>
</defs>
<rect width="1909" height="660" fill="url(#p3sky)"/>
<ellipse cx="920" cy="270" rx="470" ry="190" fill="#ece8e5" filter="url(#p3a)"/>
<ellipse cx="1620" cy="100" rx="480" ry="180" fill="#f8f7f6" filter="url(#p3a)"/>
<ellipse cx="420" cy="200" rx="380" ry="100" fill="#cfcfd1" filter="url(#p3a)"/>
<ellipse cx="1500" cy="560" rx="560" ry="120" fill="#e0d6c9" filter="url(#p3a)"/>
<ellipse cx="280" cy="560" rx="420" ry="100" fill="#8290a4" filter="url(#p3a)"/>
<g filter="url(#p3b)"><ellipse cx="760" cy="36" rx="430" ry="60" fill="#3f5068"/><ellipse cx="1020" cy="90" rx="120" ry="34" fill="#3a4a62"/><ellipse cx="110" cy="60" rx="230" ry="70" fill="#56657b"/><ellipse cx="330" cy="400" rx="390" ry="40" fill="#4c5b72"/><ellipse cx="700" cy="330" rx="200" ry="34" fill="#717b8c" opacity=".9"/><ellipse cx="1260" cy="290" rx="230" ry="36" fill="#747d8c"/><ellipse cx="1640" cy="262" rx="300" ry="30" fill="#626e81"/><ellipse cx="1720" cy="150" rx="210" ry="26" fill="#7c8696"/><ellipse cx="1250" cy="420" rx="180" ry="16" fill="#848c99"/><ellipse cx="1820" cy="465" rx="90" ry="9" fill="#727d8f"/></g>
<rect width="1909" height="650" filter="url(#p3n)" opacity=".42"/>
<!-- land -->
<rect y="650" width="1909" height="776" fill="url(#p3land)"/>
<path d="M0 636h1909v26H0z" fill="#71849a" filter="url(#p3c)" opacity=".8"/>
<path d="M1200 652c200-16 400-14 560-2z" fill="#4b6580" filter="url(#p3d)"/>
<path d="M380 742c200-44 520-36 780-44s540-6 749 12v180H380z" fill="#182a40" filter="url(#p3c)"/>
<path d="M380 900c300-40 900-40 1529 0v546H380z" fill="#151f2b" filter="url(#p3a)"/>
<!-- valley lights -->
<rect x="0" y="760" width="1909" height="666" filter="url(#p3sp)" mask="url(#p3m)" opacity=".6"/>
<path d="M1290 900c40-30 120-44 200-46" stroke="#a69a8a" stroke-width="9" fill="none" filter="url(#p3c)" opacity=".4"/>
<path d="M640 1230c60-50 120-90 190-120" stroke="#55663f" stroke-width="18" fill="none" filter="url(#p3c)" opacity=".4"/>
<!-- left mountain -->
<path d="M0 578c80 40 160 84 230 120s150 86 230 124 200 70 260 130L480 1060 200 1150 0 1210z" fill="url(#p3ml)" filter="url(#p3c)"/>
<!-- right mountain -->
<path d="M1909 738c-80 30-150 60-220 84s-150 56-230 104-150 130-200 230-50 170-30 270h680z" fill="#121a25" filter="url(#p3c)"/>
<path d="M1680 830c60-30 140-60 229-80v110c-80 10-160 0-229-30z" fill="#1e2b3a" filter="url(#p3b)" opacity=".8"/>
<!-- road -->
<path d="M1010 1150c-30 60 20 130 60 190s60 70 40 86M1120 1140c60 40 110 100 110 160s-60 90-130 80" stroke="#2f3a47" stroke-width="6" fill="none" opacity=".7"/>
<!-- foreground rock -->
<path d="M560 1426c80-60 180-150 300-170 80-12 160 10 200 60 20 40 30 80 20 110z" fill="#1d2123" filter="url(#p3c)"/>
<path d="M930 1290c50-20 100-10 130 30 18 34 24 70 18 106H960c-20-50-30-100-30-136z" fill="#44484a" filter="url(#p3c)" opacity=".8"/>
<rect y="1330" width="1909" height="140" fill="#0b1016" filter="url(#p3b)" opacity=".4"/>
</svg>
</div><div class="a mo mono">MARS 2026</div><div class="a wm">ECKODEATH</div><div class="a ct">Brume de gorges</div><div class="a cs mono">PAYSAGE · IPHONE 16 PRO MAX</div></div>
<div class="a card2" style="left:714.5px"><svg width="32" height="32" viewBox="0 0 32 32"><rect x="1" y="1" width="30" height="30" rx="2.5" fill="none" stroke="#dcdcdc" stroke-width="1.3"/><circle cx="16" cy="16" r="5.3" fill="none" stroke="#dcdcdc" stroke-width="1.3"/></svg></div>
<div class="a card2" style="left:1148.75px"><svg width="32" height="32" viewBox="0 0 32 32"><rect x="1" y="1" width="30" height="30" rx="2.5" fill="none" stroke="#dcdcdc" stroke-width="1.3"/><circle cx="16" cy="16" r="5.3" fill="none" stroke="#dcdcdc" stroke-width="1.3"/></svg></div>
<div class="a card2" style="left:1583px"><svg width="32" height="32" viewBox="0 0 32 32"><rect x="1" y="1" width="30" height="30" rx="2.5" fill="none" stroke="#dcdcdc" stroke-width="1.3"/><circle cx="16" cy="16" r="5.3" fill="none" stroke="#dcdcdc" stroke-width="1.3"/></svg></div>
</div></div>
</div></div>
<div id="cam" class="a"></div>
</body>
</html>
